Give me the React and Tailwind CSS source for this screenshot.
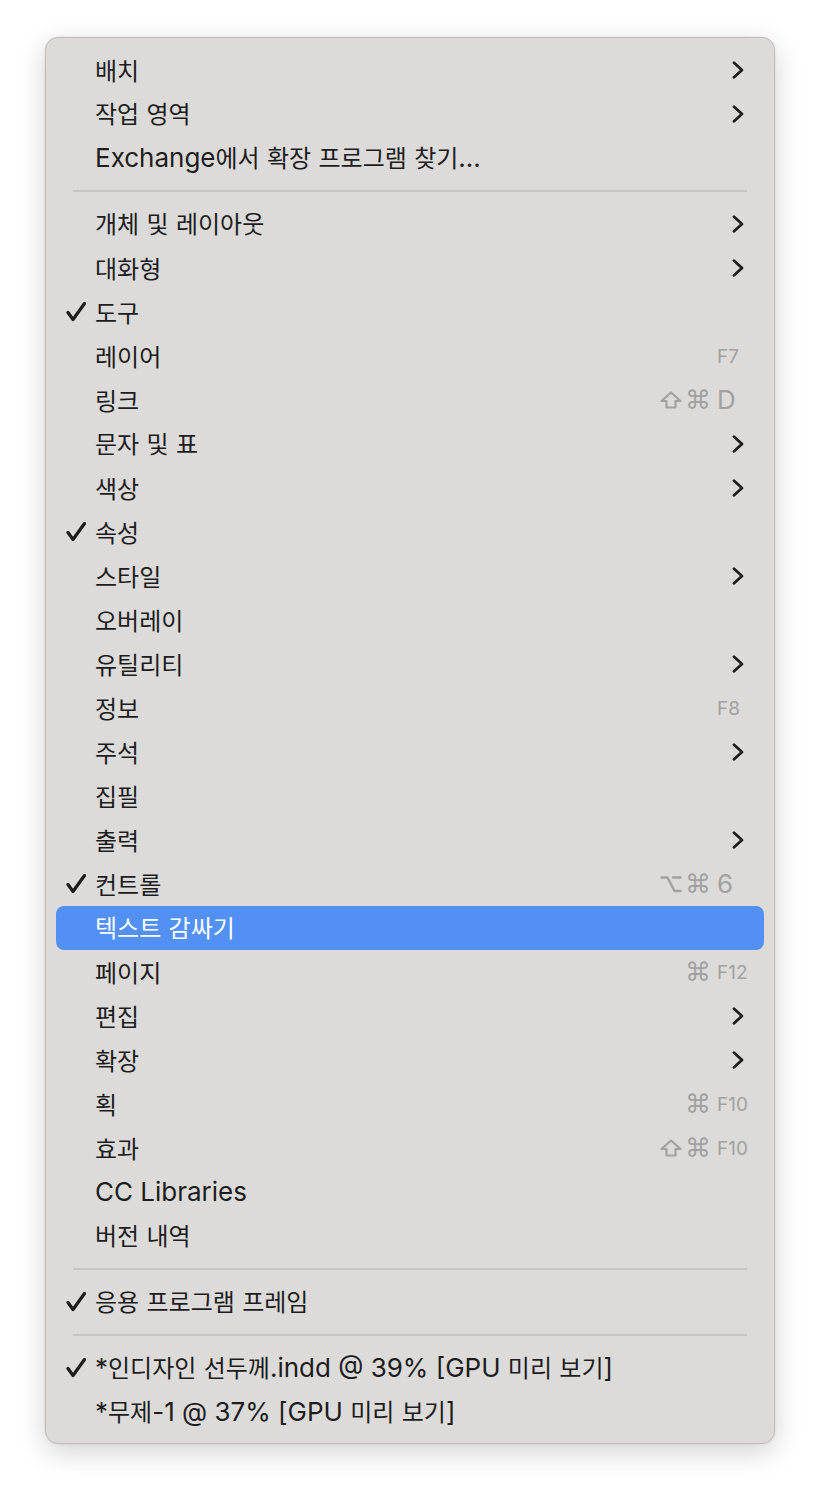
import React from "react";

const items = [
  { label: "배치", sub: true },
  { label: "작업 영역", sub: true },
  { label: "Exchange에서 확장 프로그램 찾기..." },
  { sep: true },
  { label: "개체 및 레이아웃", sub: true },
  { label: "대화형", sub: true },
  { label: "도구", check: true },
  { label: "레이어", keys: { key: "F7", small: true } },
  { label: "링크", keys: { mod: "shift", cmd: true, key: "D" } },
  { label: "문자 및 표", sub: true },
  { label: "색상", sub: true },
  { label: "속성", check: true },
  { label: "스타일", sub: true },
  { label: "오버레이" },
  { label: "유틸리티", sub: true },
  { label: "정보", keys: { key: "F8", small: true } },
  { label: "주석", sub: true },
  { label: "집필" },
  { label: "출력", sub: true },
  { label: "컨트롤", check: true, keys: { mod: "option", cmd: true, key: "6" } },
  { label: "텍스트 감싸기", active: true },
  { label: "페이지", keys: { cmd: true, key: "F12", small: true } },
  { label: "편집", sub: true },
  { label: "확장", sub: true },
  { label: "획", keys: { cmd: true, key: "F10", small: true } },
  { label: "효과", keys: { mod: "shift", cmd: true, key: "F10", small: true } },
  { label: "CC Libraries" },
  { label: "버전 내역" },
  { sep: true },
  { label: "응용 프로그램 프레임", check: true },
  { sep: true },
  { label: "*인디자인 선두께.indd @ 39% [GPU 미리 보기]", check: true },
  { label: "*무제-1 @ 37% [GPU 미리 보기]" },
];

// hangul runs get the CJK font, everything else Inter
function Label({ text }) {
  const parts = text.split(/([가-힣]+)/).filter((p) => p !== "");
  return (
    <span className="whitespace-pre">
      {parts.map((p, i) =>
        /[가-힣]/.test(p) ? (
          <span key={i} className="font-['Noto_Sans_CJK_KR',sans-serif] text-[24px]">
            {p}
          </span>
        ) : (
          <span key={i} className="font-['Inter','Noto_Sans_CJK_KR',sans-serif] text-[26px]">
            {p}
          </span>
        )
      )}
    </span>
  );
}

function Check({ white }) {
  return (
    <svg width="20" height="20" viewBox="0 0 20 20" fill="none">
      <path
        d="M2 10.5 L7 17.5 L18.5 1.5"
        stroke={white ? "#ffffff" : "#1c1c1c"}
        strokeWidth="3.2"
        strokeLinecap="round"
        strokeLinejoin="round"
      />
    </svg>
  );
}

function Chevron({ white }) {
  return (
    <svg width="12" height="18" viewBox="0 0 12 18" fill="none">
      <path
        d="M2 1.8 L10 9 L2 16.2"
        stroke={white ? "#ffffff" : "#1c1c1c"}
        strokeWidth="2.8"
        strokeLinecap="round"
        strokeLinejoin="round"
      />
    </svg>
  );
}

function ShiftIcon() {
  return (
    <svg width="22" height="18" viewBox="0 0 22 18" fill="none">
      <path
        d="M11 1.5 L20.5 10 H15.5 V16.5 H6.5 V10 H1.5 Z"
        stroke="#a2a1a0"
        strokeWidth="2.2"
        strokeLinejoin="round"
      />
    </svg>
  );
}

function OptionIcon() {
  return (
    <svg width="22" height="18" viewBox="0 0 22 18" fill="none">
      <path
        d="M1.5 2.5 H7.5 L14.5 16 H20.5 M13 2.5 H20.5"
        stroke="#a2a1a0"
        strokeWidth="2.4"
        strokeLinecap="round"
        strokeLinejoin="round"
      />
    </svg>
  );
}

function Shortcut({ keys }) {
  return (
    <div className="ml-auto flex items-center leading-none text-[#a2a1a0]">
      <div className="flex w-[22px] justify-center">
        {keys.mod === "shift" && <ShiftIcon />}
        {keys.mod === "option" && <OptionIcon />}
      </div>
      <div className="ml-[6px] flex w-[20px] justify-center">
        {keys.cmd && <span className="font-['DejaVu_Sans',sans-serif] text-[26px]">⌘</span>}
      </div>
      <div className="ml-[9px] w-[47px]">
        {keys.small ? (
          <span className="font-['Inter',sans-serif] text-[19px]">{keys.key}</span>
        ) : (
          <span className="font-['Inter',sans-serif] text-[26px]">{keys.key}</span>
        )}
      </div>
    </div>
  );
}

function Row({ item }) {
  const { label, sub, check, keys, active } = item;
  return (
    <div
      className={
        "flex h-[44px] items-center rounded-[8px] pl-[10px] " +
        (active ? "bg-[#5290f3] text-white" : "text-[#1c1c1c]")
      }
    >
      <div className="flex w-[29px] items-center">{check && <Check white={active} />}</div>
      <div className="leading-none">
        <Label text={label} />
      </div>
      {sub && (
        <div className="ml-auto flex items-center pr-[20px]">
          <Chevron white={active} />
        </div>
      )}
      {keys && <Shortcut keys={keys} />}
    </div>
  );
}

export default function App() {
  return (
    <div className="min-h-screen bg-white pl-[45px] pt-[37px]">
      <div className="w-[730px] rounded-[13px] border border-[#bdbcbb] bg-[#dcdbda] px-[10px] pt-[10px] pb-[9px] shadow-[0_8px_28px_rgba(0,0,0,0.18),0_0_3px_rgba(0,0,0,0.08)]">
        {items.map((item, i) =>
          item.sep ? (
            <div key={i} className="flex h-[22px] items-center px-[17px]">
              <div className="h-[2px] w-full bg-[#c6c5c4]" />
            </div>
          ) : (
            <Row key={i} item={item} />
          )
        )}
      </div>
    </div>
  );
}
